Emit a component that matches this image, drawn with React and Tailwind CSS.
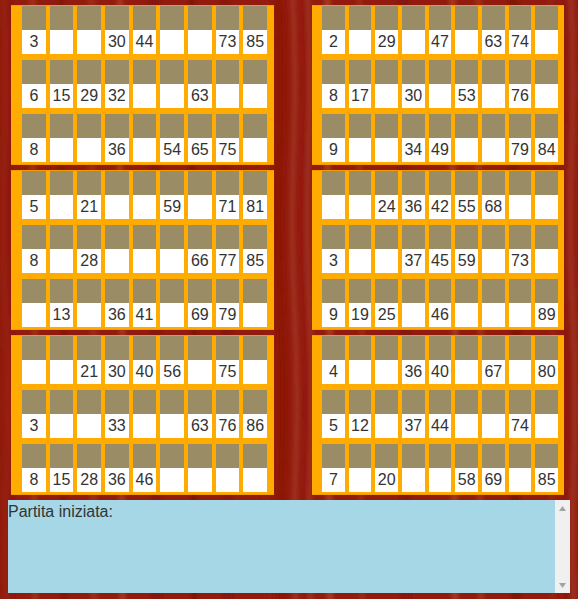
const cards = [
  {
    id: 1,
    rows: [
      [3, null, null, 30, 44, null, null, 73, 85],
      [6, 15, 29, 32, null, null, 63, null, null],
      [8, null, null, 36, null, 54, 65, 75, null],
    ],
  },
  {
    id: 2,
    rows: [
      [2, null, 29, null, 47, null, 63, 74, null],
      [8, 17, null, 30, null, 53, null, 76, null],
      [9, null, null, 34, 49, null, null, 79, 84],
    ],
  },
  {
    id: 3,
    rows: [
      [5, null, 21, null, null, 59, null, 71, 81],
      [8, null, 28, null, null, null, 66, 77, 85],
      [null, 13, null, 36, 41, null, 69, 79, null],
    ],
  },
  {
    id: 4,
    rows: [
      [null, null, 24, 36, 42, 55, 68, null, null],
      [3, null, null, 37, 45, 59, null, 73, null],
      [9, 19, 25, null, 46, null, null, null, 89],
    ],
  },
  {
    id: 5,
    rows: [
      [null, null, 21, 30, 40, 56, null, 75, null],
      [3, null, null, 33, null, null, 63, 76, 86],
      [8, 15, 28, 36, 46, null, null, null, null],
    ],
  },
  {
    id: 6,
    rows: [
      [4, null, null, 36, 40, null, 67, null, 80],
      [5, 12, null, 37, 44, null, null, 74, null],
      [7, null, 20, null, null, 58, 69, null, 85],
    ],
  },
];

// Wood grain behind the cards: x, width and colour of each soft streak.
const grain = [
  [0, 3, "#8c1a0b"], [3, 4, "#9c2415"], [8, 3, "#84160a"], [30, 6, "#a03018"],
  [60, 4, "#7c1406"], [88, 8, "#9c2c18"], [118, 5, "#a83a20"], [150, 9, "#84180a"],
  [190, 5, "#7c1406"], [222, 7, "#84160a"], [262, 6, "#981f10"], [276, 7, "#8a1606"],
  [291, 5, "#a03220"], [299, 6, "#941410"], [306, 5, "#9c3020"],
  [325, 6, "#a83a20"], [358, 4, "#a03018"], [400, 8, "#84180a"], [450, 6, "#a83a20"],
  [476, 6, "#a03018"], [510, 8, "#7c1406"], [548, 5, "#982414"], [565, 3, "#84160a"],
  [569, 5, "#a03320"], [575, 3, "#941c0e"],
];

function Wood() {
  return (
    <svg
      className="absolute inset-0 -z-10 h-full w-full"
      viewBox="0 0 578 599"
      preserveAspectRatio="none"
      aria-hidden="true"
    >
      <defs>
        <filter id="soften" x="-5%" width="110%" y="-5%" height="110%">
          <feGaussianBlur stdDeviation="2 4" />
        </filter>
      </defs>
      <rect width="578" height="599" fill="#921b0d" />
      <g filter="url(#soften)" fill="none">
        {grain.map(([x, width, color]) => (
          <path
            key={x}
            d={`M${x + width / 2 - 1} -10 q4 80 1 160 t1 160 t1 160 t1 150`}
            stroke={color}
            strokeWidth={width}
          />
        ))}
      </g>
    </svg>
  );
}

function Card({ id, rows }) {
  return (
    <table
      aria-label={`Cartella ${id}`}
      className="block border-y border-[#f39c00] bg-[#ffab00] pr-[6px] pb-[2px] pl-[10px] odd:pr-[7px] odd:pl-[11px]"
    >
      <tbody className="grid gap-y-1.5">
        {rows.map((row, r) => (
          <tr key={r} className="grid grid-cols-9 gap-x-1">
            {row.map((number, c) => (
              <td key={c} className="block bg-white text-center">
                <div className="h-6 bg-[#9a8c64]" />
                <div className="h-6 leading-6">{number}</div>
              </td>
            ))}
          </tr>
        ))}
      </tbody>
    </table>
  );
}

export default function App() {
  return (
    <main className="relative isolate min-h-screen px-2 pt-[5px] pb-[6px] font-['Liberation_Sans',Arial,sans-serif] text-base text-[#333]">
      <Wood />
      <section className="grid grid-cols-[263fr_252fr] gap-x-[38px] gap-y-[5px] pr-[6px] pl-[3px]">
        {cards.map((card) => (
          <Card key={card.id} {...card} />
        ))}
      </section>
      <section className="mt-[5px] flex h-[93px]">
        <textarea
          aria-label="Messaggi"
          readOnly
          defaultValue="Partita iniziata:"
          className="min-w-0 flex-1 resize-none overflow-hidden bg-[#a6d7e6] leading-6 outline-none"
        />
        <div className="flex w-[15px] flex-col justify-between bg-[#f0f0f0]">
          <button type="button" aria-label="Scorri su" className="flex h-4 items-center justify-center">
            <svg width="7" height="5" viewBox="0 0 7 5" fill="#a3a3a3">
              <path d="M0 5L3.5 0L7 5z" />
            </svg>
          </button>
          <button type="button" aria-label="Scorri giù" className="flex h-4 items-center justify-center">
            <svg width="7" height="5" viewBox="0 0 7 5" fill="#a3a3a3">
              <path d="M0 0L3.5 5L7 0z" />
            </svg>
          </button>
        </div>
      </section>
    </main>
  );
}
